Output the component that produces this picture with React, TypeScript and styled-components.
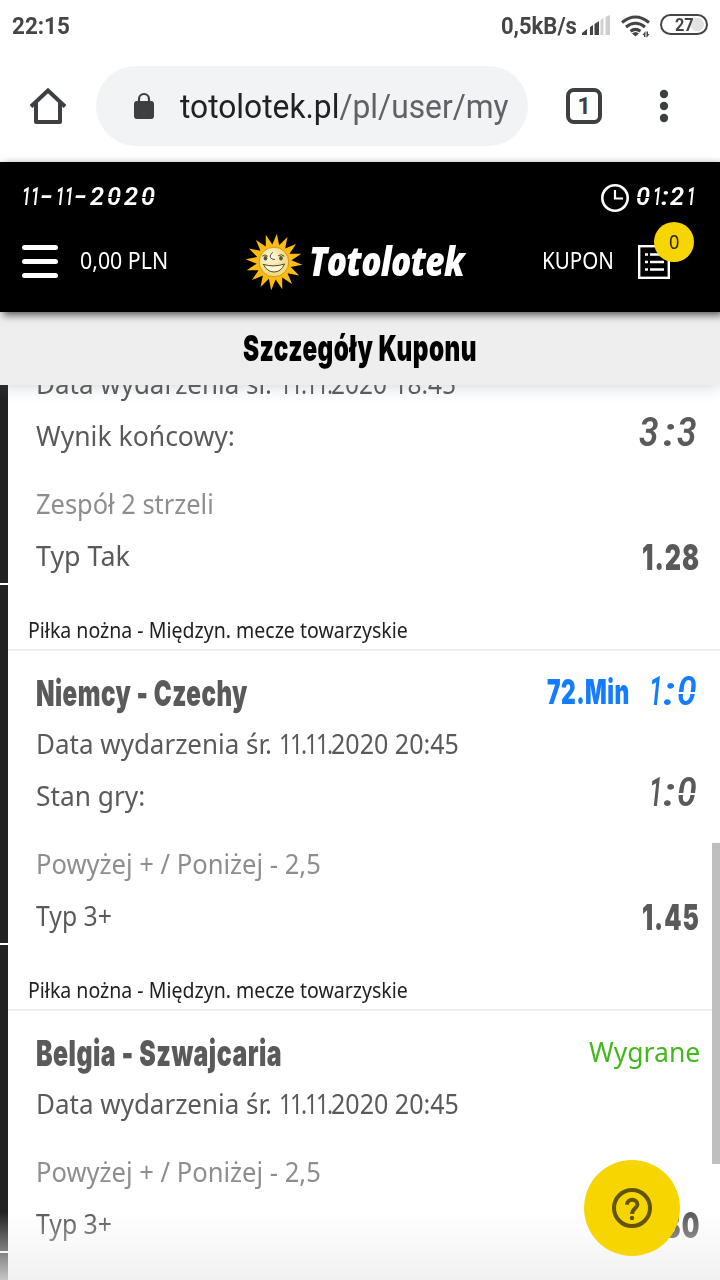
import React, { useLayoutEffect, useRef, useState } from 'react';
import styled, { createGlobalStyle, css } from 'styled-components';

const GlobalStyle = createGlobalStyle`
  * { box-sizing: border-box; }
  body { margin: 0; background: #fff; font-family: 'Noto Sans', sans-serif; }
`;

/* Condensed type: the text is squeezed horizontally to a given width. */
const FitBox = styled.span<{ $w: number }>`
  display: inline-block;
  flex: none;
  width: ${p => p.$w}px;
  white-space: pre;
`;
const FitInner = styled.span`
  display: inline-block;
  transform-origin: 0 50%;
`;

function Fit({ w, children, className }: { w: number; children: React.ReactNode; className?: string }) {
  const ref = useRef<HTMLSpanElement>(null);
  const [scale, setScale] = useState(1);
  useLayoutEffect(() => {
    if (ref.current) setScale(w / ref.current.offsetWidth);
  }, [w]);
  return (
    <FitBox $w={w} className={className}>
      <FitInner ref={ref} style={{ transform: `scaleX(${scale})` }}>{children}</FitInner>
    </FitBox>
  );
}

/* Segment-display type: narrow cells for 1 and the colon, a gap at mid height. */
const LedBox = styled.span<{ $size: number }>`
  display: inline-block;
  flex: none;
  white-space: nowrap;
  font: italic 600 ${p => p.$size}px/1.2 Roboto, sans-serif;
  padding-top: 2px;
`;
const LedCell = styled.span<{ $w: number }>`
  display: inline-block;
  width: ${p => p.$w}em;
`;
const LedGlyph = styled.span<{ $scale: number; $split: boolean }>`
  display: inline-block;
  transform: scaleX(${p => p.$scale});
  transform-origin: 0 50%;
  ${p => p.$split && css`
    mask-image: linear-gradient(#000 49%, transparent 49%, transparent 54%, #000 54%);
    mask-clip: no-clip;
  `}
`;
const ledMetrics: Record<string, [number, number]> = {
  '1': [0.34, 0.6],
  ':': [0.34, 1.15],
  '-': [0.63, 1.4],
};

function Led({ size, text }: { size: number; text: string }) {
  return (
    <LedBox $size={size}>
      {text.split('').map((ch, i) => {
        const [w, scale] = ledMetrics[ch] ?? (size > 30 ? [0.57, 0.86] : [0.65, 0.98]);
        return (
          <LedCell key={i} $w={w}>
            <LedGlyph $scale={scale} $split={ch === '0'}>{ch}</LedGlyph>
          </LedCell>
        );
      })}
    </LedBox>
  );
}

const Screen = styled.div`
  position: relative;
  width: 720px;
  height: 1280px;
  overflow: hidden;
  display: flex;
  flex-direction: column;
  background: #fff;
`;

const StatusBar = styled.div`
  height: 52px;
  flex: none;
  display: flex;
  align-items: center;
  padding: 0 12px;
  font: 700 24px/52px Roboto, sans-serif;
  color: #454545;
`;
const Spacer = styled.div`flex: 1;`;
const SignalIcon = styled.svg`display: block; margin: 0 11px 2px 5px;`;
const WifiIcon = styled.svg`display: block; margin: 0 10px 0 0;`;
const Battery = styled.div`
  width: 48px;
  height: 21px;
  margin-bottom: 3px;
  border: 2px solid #454545;
  border-radius: 11px;
  display: flex;
  justify-content: center;
  align-items: center;
  font: 700 18px/17px Roboto, sans-serif;
  background: radial-gradient(circle at 35px 8.5px, #e2e2e2 6.5px, transparent 7px);
`;

const Toolbar = styled.div`
  height: 110px;
  flex: none;
  display: flex;
  align-items: center;
  padding: 0 51px 2px 28px;
`;
const AddressBar = styled.div`
  width: 432px;
  height: 80px;
  margin: 0 36px 0 28px;
  border-radius: 40px;
  background: #f1f3f5;
  display: flex;
  align-items: center;
  padding: 0 20px 0 37px;
`;
const Url = styled.div`
  width: 328px;
  margin: 2px 0 0 25px;
  overflow: hidden;
  font: 400 33px/44px Roboto, sans-serif;
  color: #5f6368;
  b { font-weight: 400; color: #202124; }
`;
const TabCount = styled.div`
  width: 36px;
  height: 36px;
  border: 4px solid #3c4043;
  border-radius: 8px;
  font: 700 23px/29px Roboto, sans-serif;
  text-align: center;
  color: #3c4043;
`;
const MenuDots = styled.svg`display: block; margin-left: 57px;`;

const Header = styled.header`
  position: relative;
  z-index: 3;
  height: 150px;
  flex: none;
  background: #000;
  color: #fff;
  padding: 14px 24px 0 22px;
  box-shadow: 3px 3px 8px rgba(0, 0, 0, 0.65);
`;
const HeaderRow = styled.div<{ $h: number; $end?: number }>`
  height: ${p => p.$h}px;
  padding-right: ${p => p.$end ?? 0}px;
  display: flex;
  align-items: center;
`;
const ClockIcon = styled.svg`display: block; margin: 4px 7px 0 0;`;
const Burger = styled.div`
  width: 36px;
  height: 33px;
  margin: 0 22px 1px 0;
  display: flex;
  flex-direction: column;
  justify-content: space-between;
  i { height: 5px; border-radius: 3px; background: #fff; }
`;
const HeaderLabel = styled(Fit)`
  font-size: 24px;
  line-height: 30px;
  margin-bottom: 4px;
`;
const Logo = styled.div`
  display: flex;
  align-items: center;
  margin-left: 77px;
`;
const LogoName = styled(Fit)`
  font: italic 800 40px/44px 'Open Sans', sans-serif;
  letter-spacing: -0.02em;
  margin: 0 0 2px 6px;
`;
const Coupon = styled.div`
  position: relative;
  display: flex;
  margin: 0 0 0 24px;
`;
const Badge = styled.span`
  position: absolute;
  left: 16px;
  top: -23px;
  width: 40px;
  height: 40px;
  border-radius: 50%;
  background: #f6d500;
  color: #2b2600;
  font-size: 20px;
  line-height: 39px;
  text-align: center;
`;

const TitleBar = styled.div`
  position: relative;
  z-index: 2;
  height: 73px;
  flex: none;
  display: flex;
  justify-content: center;
  background: #eee;
  box-shadow: 0 2px 14px rgba(110, 130, 138, 0.3);
`;
const bold = css`
  font-family: Inter, 'Open Sans', sans-serif;
  font-weight: 900;
  letter-spacing: 0.02em;
`;
const PageTitle = styled(Fit)`
  ${bold}
  color: #000;
  font-size: 36px;
  line-height: 72px;
`;

const ScrollArea = styled.main`
  flex: 1;
  min-height: 0;
  overflow: hidden;
`;
const BetList = styled.div`margin-top: -27px;`;
const Bet = styled.article`
  background: linear-gradient(#222, #222) 0 0 / 8px 100% no-repeat #fff;
  padding-left: 8px;
  border-bottom: 2px solid #fff;
  background-clip: padding-box;
`;
const League = styled.div`
  height: 66px;
  padding: 27px 0 0 20px;
  border-bottom: 2px solid #eee;
  color: #222;
  font-size: 22px;
  line-height: 34px;
`;
const Body = styled.div<{ $flush?: boolean }>`
  padding: ${p => (p.$flush ? 0 : 16)}px 20px 1px 28px;
`;
const Row = styled.div<{ $title?: boolean; $gap?: boolean; $muted?: boolean }>`
  height: ${p => (p.$title ? 51 : 52)}px;
  margin-top: ${p => (p.$gap ? 16 : 0)}px;
  padding-bottom: 3px;
  display: flex;
  align-items: center;
  justify-content: space-between;
  color: ${p => (p.$muted ? '#8e8e8e' : '#5a5a5a')};
  font-size: 28px;
  line-height: 52px;
`;
const Strong = styled(Fit)`
  ${bold}
  font-size: 36px;
  margin-top: 3px;
`;
const Odds = styled(Strong)`
  margin-top: 5px;
  letter-spacing: 0.04em;
`;
const TightFit = styled(Fit)`letter-spacing: -0.09em;`;
const Live = styled.div`
  display: flex;
  align-items: center;
  gap: 19px;
  color: #147cff;
`;
const Minute = styled(Fit)`
  ${bold}
  font-size: 34px;
  margin-top: 1px;
`;
const Score = styled.div`padding: 0 0 5px 0; display: flex;`;
const Won = styled.div`color: #43b91c; display: flex;`;

const ScrollThumb = styled.div`
  position: absolute;
  right: 0;
  top: 843px;
  width: 8px;
  height: 321px;
  background: #bfbfbf;
`;
const BottomFade = styled.div`
  position: absolute;
  left: 0;
  right: 0;
  bottom: 0;
  height: 68px;
  background: linear-gradient(rgba(238, 238, 238, 0), rgba(238, 238, 238, 0.8));
`;
const HelpButton = styled.button`
  position: absolute;
  left: 584px;
  top: 1160px;
  width: 96px;
  height: 96px;
  border: 0;
  padding: 0;
  border-radius: 50%;
  background: #f6d500;
  display: flex;
  align-items: center;
  justify-content: center;
`;

const rays = Array.from({ length: 32 }, (_, i) => {
  const r = i % 2 ? 17.5 : 28.5;
  const a = (i * Math.PI) / 16 - Math.PI / 2 + 0.1;
  return `${30 + r * Math.cos(a)},${30 + r * Math.sin(a)}`;
}).join(' ');

const Sun = () => (
  <svg width="58" height="58" viewBox="1 1 58 58">
    <defs>
      <radialGradient id="face" cx=".4" cy=".35">
        <stop offset="0" stopColor="#fffce0" />
        <stop offset="1" stopColor="#f2dc83" />
      </radialGradient>
    </defs>
    <polygon points={rays} fill="#fdbb10" />
    <circle cx="30" cy="30" r="14.8" fill="url(#face)" stroke="#c98a12" strokeWidth=".8" />
    <g fill="none" stroke="#3c3524" strokeWidth=".9" strokeLinecap="round">
      <path d="M18.5 24q2.5-2.5 5 0M34.500 23.500q3-2 5.500.5M28.500 20.500q-4.500 4-.5 6.500l2.500.5" />
      <path d="M19.500 32.500Q30 35.500 40.500 32Q37 40 30 40Q23 40 19.500 32.500Z" fill="#fff7cf" />
    </g>
    <ellipse cx="21.500" cy="26.300" rx="1.800" ry="2.200" fill="#555448" />
    <ellipse cx="37" cy="26.300" rx="1.800" ry="2.200" fill="#555448" />
  </svg>
);

function EventDate({ time, w }: { time: string; w: number }) {
  return (
    <span>
      <Fit w={243}>{'Data wydarzenia śr. '}</Fit>
      <TightFit w={52}>11.11.</TightFit>
      <Fit w={w}>2020 {time}</Fit>
    </span>
  );
}

export default function App() {
  return (
    <Screen>
      <GlobalStyle />
      <StatusBar>
        <Fit w={58}>22:15</Fit>
        <Spacer />
        <Fit w={76}>0,5kB/s</Fit>
        <SignalIcon width="28" height="20" viewBox="0 0 28 20">
          <path d="M0 20V18L5 14V20ZM8 20V12L11 10V20ZM12.500 20V9L17 6V20Z" fill="#454545" />
          <path d="M18.500 20V5L21.500 3V20ZM23.500 20V2L28 0V20Z" fill="#cfcfcf" />
        </SignalIcon>
        <WifiIcon width="29" height="23" viewBox="0 0 29 23">
          <g fill="none" stroke="#454545" strokeWidth="3">
            <path d="M1 7.500Q14.500-3.500 28 7.500" />
            <path d="M5 12Q14.500 4.500 24 12" />
            <path d="M9.500 16.200Q14.500 12.500 19.500 16.200" />
          </g>
          <path d="M11 18.500Q14.500 15.500 18 18.500L14.500 21.500Z" fill="#454545" />
          <path d="M21.500 20L24.500 16V22H23V20ZM25.500 16.500H27V19H28.500L25.500 23Z" fill="#454545" />
        </WifiIcon>
        <Battery><Fit w={19}>27</Fit></Battery>
      </StatusBar>

      <Toolbar>
        <svg width="40" height="40" viewBox="0 0 40 40" fill="none" stroke="#3c4043" strokeWidth="4" strokeLinejoin="round">
          <path d="M3 20.500L20 4.500L37 20.500" strokeLinejoin="miter" />
          <path d="M8 17V36H32V17" />
        </svg>
        <AddressBar>
          <svg width="22" height="28" viewBox="0 0 22 28">
            <path d="M6 11V7a5 5 0 0 1 10 0V11" fill="none" stroke="#3c4043" strokeWidth="2.200" />
            <rect x="1" y="9" width="20" height="18" rx="3" fill="#3c4043" />
          </svg>
          <Url><Fit w={329}><b>totolotek.pl</b>/pl/user/my</Fit></Url>
        </AddressBar>
        <Spacer />
        <TabCount>1</TabCount>
        <MenuDots width="10" height="36" viewBox="0 0 10 36" fill="#3c4043">
          <circle cx="5" cy="6" r="4.200" /><circle cx="5" cy="18" r="4.200" /><circle cx="5" cy="30" r="4.200" />
        </MenuDots>
      </Toolbar>

      <Header>
        <HeaderRow $h={40}>
          <Led size={26} text="11-11-2020" />
          <Spacer />
          <ClockIcon width="28" height="28" viewBox="0 0 28 28" fill="none" stroke="#fff">
            <circle cx="14" cy="14" r="12.700" strokeWidth="2.600" />
            <path d="M14 6V14.500H22" strokeWidth="2.200" />
          </ClockIcon>
          <Led size={26} text="01:21" />
        </HeaderRow>
        <HeaderRow $h={92} $end={26}>
          <Burger><i /><i /><i /></Burger>
          <HeaderLabel w={88}>0,00 PLN</HeaderLabel>
          <Logo>
            <Sun />
            <LogoName w={155}>Totolotek</LogoName>
          </Logo>
          <Spacer />
          <HeaderLabel w={72}>KUPON</HeaderLabel>
          <Coupon>
            <svg width="32" height="34" viewBox="0 0 32 34">
              <rect x="1.200" y="1.200" width="29.600" height="31.600" fill="none" stroke="#fff" strokeWidth="2.400" />
              <path d="M7 9.500h3M12 9.500h14M7 17h3M12 17h14M7 24.500h3M12 24.500h14" stroke="#fff" strokeWidth="2.600" />
            </svg>
            <Badge><Fit w={10}>0</Fit></Badge>
          </Coupon>
        </HeaderRow>
      </Header>

      <TitleBar><PageTitle w={234}>Szczegóły Kuponu</PageTitle></TitleBar>

      <ScrollArea>
        <BetList>
          <Bet>
            <Body $flush>
              <Row><EventDate time="18:45" w={125} /></Row>
              <Row>
                <Fit w={199}>Wynik końcowy:</Fit>
                <Score><Led size={41} text="3:3" /></Score>
              </Row>
              <Row $gap $muted><Fit w={178}>Zespół 2 strzeli</Fit></Row>
              <Row><Fit w={94}>Typ Tak</Fit><Odds w={58}>1.28</Odds></Row>
            </Body>
          </Bet>
          <Bet>
            <League><Fit w={380}>Piłka nożna - Międzyn. mecze towarzyskie</Fit></League>
            <Body>
              <Row $title>
                <Strong w={212}>Niemcy - Czechy</Strong>
                <Live><Minute w={83}>72.Min</Minute><Led size={41} text="1:0" /></Live>
              </Row>
              <Row><EventDate time="20:45" w={128} /></Row>
              <Row>
                <Fit w={109}>Stan gry:</Fit>
                <Score><Led size={41} text="1:0" /></Score>
              </Row>
              <Row $gap $muted><Fit w={285}>Powyżej + / Poniżej - 2,5</Fit></Row>
              <Row><Fit w={76}>Typ 3+</Fit><Odds w={58}>1.45</Odds></Row>
            </Body>
          </Bet>
          <Bet>
            <League><Fit w={380}>Piłka nożna - Międzyn. mecze towarzyskie</Fit></League>
            <Body>
              <Row $title>
                <Strong w={246}>Belgia - Szwajcaria</Strong>
                <Won><Fit w={111}>Wygrane</Fit></Won>
              </Row>
              <Row><EventDate time="20:45" w={128} /></Row>
              <Row $gap $muted><Fit w={285}>Powyżej + / Poniżej - 2,5</Fit></Row>
              <Row><Fit w={76}>Typ 3+</Fit><Odds w={58}>1.30</Odds></Row>
            </Body>
          </Bet>
          <Bet><League /></Bet>
        </BetList>
      </ScrollArea>

      <ScrollThumb />
      <BottomFade />
      <HelpButton>
        <svg width="48" height="48" viewBox="0 0 48 48" fill="none" stroke="#62550a" strokeWidth="4">
          <circle cx="24" cy="24" r="18" />
          <path d="M19 20.800V20.500a5.200 4.700 0 0 1 10.400 0c0 3.800-5.300 4-5.300 9.500" />
          <circle cx="24" cy="34" r="2.200" fill="#62550a" stroke="none" />
        </svg>
      </HelpButton>
    </Screen>
  );
}
